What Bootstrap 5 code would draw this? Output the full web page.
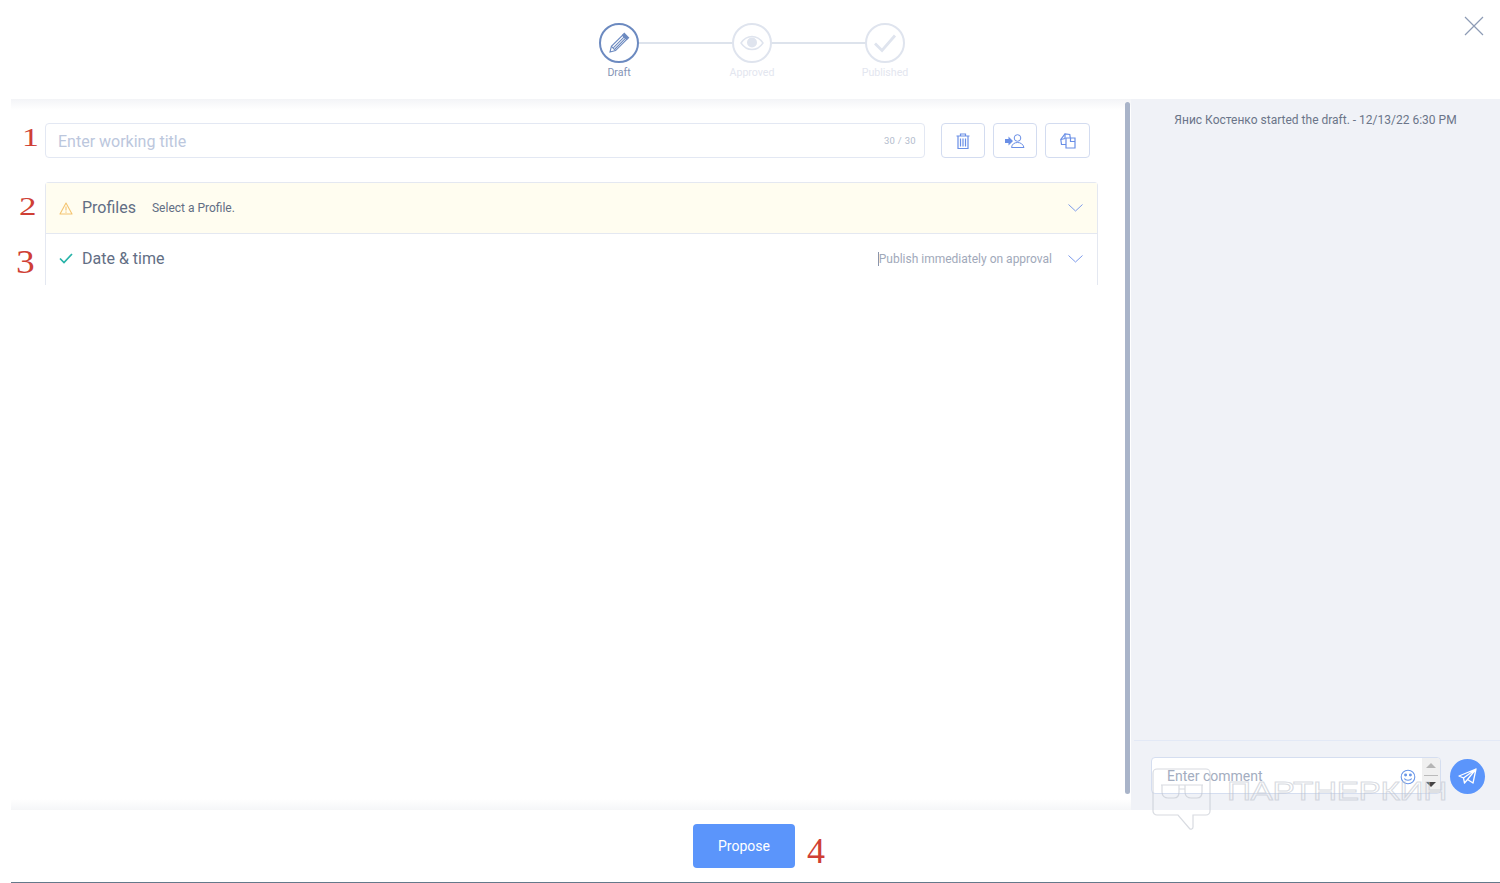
<!DOCTYPE html>
<html lang="en"><head><meta charset="utf-8"><title>Draft</title>
<link rel="stylesheet" href="https://cdn.jsdelivr.net/npm/bootstrap@5.3.0/dist/css/bootstrap.min.css">
<style>
html,body{height:883px;overflow:hidden}
body{font-family:Roboto,"Liberation Sans",sans-serif;background:#fff;color:#5f6b85;position:relative}
.top-bar{height:99px;padding-left:4px;padding-top:23px}
.step{width:133px;position:relative}
.step-circle{width:40px;height:40px;border-radius:50%;border:2px solid #dfe4ee;background:#fff;position:relative;z-index:1}
.step.on .step-circle{border-color:#6c8ac0}
.step-line{position:absolute;left:66px;width:133px;top:19px;height:2px;background:#dde3ec}
.step-label{font-size:10.6px;line-height:12px;margin-top:4px;color:#e3e6ef}
.step.on .step-label{color:#8493b5}
.close-x{position:absolute;left:1464px;top:16px}
.work-area{height:711px;margin-left:11px}
.left-pane{width:1112px;padding:24px 25px 0 34px;background:linear-gradient(#f3f4f7,#fff 11px,#fff 700px,#f5f6f8)}
.title-box{width:880px;height:35px;border:1px solid #e3e8f3;border-radius:4px;padding:2px 8px 0 12px}
.title-ph{font-size:16px;color:#bcc7dd}
.title-count{font-size:9.5px;color:#b3bccd;letter-spacing:.3px}
.tool-btn{height:35px;width:44px;border:1px solid #d3dcf0;border-radius:4px;background:#fff;padding:0}
.tool-wide{width:45px}
.acc{margin-top:24px;width:1053px;border:1px solid #e4e8f1;border-bottom:0;border-radius:4px 4px 0 0}
.acc-row{height:51px;padding:0 14px 2px 13px}
.acc-warn{height:51px;background:#fffdf0;border-bottom:1px solid #e4e8f1;padding-bottom:0}
.acc-title{font-size:16px;color:#626e84;margin-left:9px}
.acc-sub{font-size:12px;color:#626e84;margin-left:16px}
.acc-note{font-size:12px;color:#a1a9ba;border-left:1px solid #8b95ab;margin-right:16px;line-height:14px}
.scroll-gutter{width:9px;padding:3px 1px 16px 2px;background:linear-gradient(#f3f4f7,#fff 11px,#fff 700px,#f5f6f8)}
.scroll-thumb{height:100%;border-radius:3px;background:#a9b4c9}
.side-pane{background:#f0f2f7}
.log-line{font-size:12px;color:#6b7589;padding-top:14px;line-height:15px}
.composer{height:70px;margin-left:3px;border-top:1px solid #e3e9f6;padding:16px 15px 0 17px}
.comment-box{width:290px;height:37px;border:1px solid #d5def0;border-radius:4px;background:#fff;padding:2px 0 0 15px}
.comment-ph{font-size:14px;color:#a3adc0}
.comment-smile{margin-right:6px}
.spin{width:18px;background:#f0f0f0;font-size:0;margin-top:-2px}
.arrow-up{border:5px solid transparent;border-top:0;border-bottom:5px solid #b5b5b5;width:0;margin-top:5px}
.arrow-down{border:5px solid transparent;border-bottom:0;border-top:5px solid #444;width:0;margin-bottom:6px}
.spin-sep{height:1px;width:14px;background:#bbb}
.send-btn{width:35px;height:35px;border-radius:50%;background:#5b95fb;border:0;padding:0;margin-left:9px;margin-top:2px}
.foot-bar{height:73px;margin-left:11px;border-bottom:1px solid #64798a;padding-left:682px;padding-top:14px}
.propose{width:102px;height:44px;background:#5b95fb;border:0;border-radius:4px;color:#fff;font-size:14px}
.anno{position:absolute;font-family:"Liberation Serif",serif;color:#cf3f35;line-height:1;transform-origin:left center}
.anno-one{left:22px;top:125px;font-size:25px;transform:scaleX(1.35)}
.anno-two{left:19px;top:194px;font-size:25px;transform:scaleX(1.4)}
.anno-three{left:16px;top:245px;font-size:34px;transform:scaleX(1.1)}
.anno-four{left:807px;top:833px;font-size:36px}
.mark-sign{position:absolute;left:1227px;top:775px;font-family:"Liberation Sans",sans-serif;font-size:26.5px;line-height:32px;color:transparent;-webkit-text-stroke:1px rgba(190,195,205,.6);white-space:nowrap;letter-spacing:-.3px;pointer-events:none;transform:scaleX(1.26);transform-origin:left center}
.mark-icon{position:absolute;left:1152px;top:767px;pointer-events:none}
</style></head>
<body>
<header class="top-bar d-flex justify-content-center">
  <div class="step on d-flex flex-column align-items-center">
    <div class="step-line"></div>
    <div class="step-circle d-flex align-items-center justify-content-center">
      <svg width="22" height="22" viewBox="0 0 22 22" fill="none" stroke="#6c8ac0" stroke-width="1.1"><path d="M2 20l1.4-5.6L14.5 3.3l4.2 4.2L7.6 18.6z"/><path d="M3.4 14.4l4.2 4.2M5.5 15.6L16 5.2M7 17L17.4 6.4"/><path d="M14.7 3l1.6-1.6 4.3 4.3L19 7.3z" fill="#6c8ac0"/></svg>
    </div>
    <div class="step-label">Draft</div>
  </div>
  <div class="step d-flex flex-column align-items-center">
    <div class="step-line"></div>
    <div class="step-circle d-flex align-items-center justify-content-center">
      <svg width="24" height="16" viewBox="0 0 24 16" fill="none" stroke="#dfe4ee" stroke-width="1.4"><path d="M1 8c3-4.500 7-6.500 11-6.500S20 3.500 23 8c-3 4.500-7 6.500-11 6.500S4 12.500 1 8z"/><circle cx="12" cy="7.500" r="5" fill="#dfe4ee" stroke="none"/></svg>
    </div>
    <div class="step-label">Approved</div>
  </div>
  <div class="step d-flex flex-column align-items-center">
    <div class="step-circle d-flex align-items-center justify-content-center">
      <svg width="24" height="20" viewBox="0 0 24 20" fill="none" stroke="#dfe4ee" stroke-width="2.800"><path d="M2 10.500l7 7L22 2.500"/></svg>
    </div>
    <div class="step-label">Published</div>
  </div>
</header>
<svg class="close-x" width="20" height="20" viewBox="0 0 20 20" stroke="#8d9bb5" stroke-width="1.200"><path d="M1 1l18 18M19 1L1 19"/></svg>

<main class="work-area d-flex">
  <section class="left-pane">
    <div class="d-flex">
      <div class="title-box d-flex align-items-center justify-content-between">
        <span class="title-ph">Enter working title</span><span class="title-count">30 / 30</span>
      </div>
      <div class="d-flex gap-2" style="margin-left:16px">
        <button class="tool-btn d-flex align-items-center justify-content-center">
          <svg width="14" height="16" viewBox="0 0 14 16" fill="none" stroke="#6a8fe6" stroke-width="1.200"><path d="M.5 3h13M4.500 3V1h5v2M2 3v12.500h10V3M4.500 5.500v8M7 5.500v8M9.500 5.500v8"/></svg>
        </button>
        <button class="tool-btn d-flex align-items-center justify-content-center">
          <svg width="20" height="14" viewBox="0 0 20 14" fill="none" stroke="#6a8fe6" stroke-width="1"><circle cx="12.500" cy="4" r="3.300"/><path d="M6.500 13.500c.5-3.500 3-5 6-5s5.500 1.500 6.500 5z"/><path d="M0 5h3.500V2.500L8 7l-4.500 4.500V9H0z" fill="#6a8fe6" stroke="none"/></svg>
        </button>
        <button class="tool-btn tool-wide d-flex align-items-center justify-content-center">
          <svg width="16" height="16" viewBox="0 0 16 16" fill="none" stroke="#6a8fe6" stroke-width="1.200"><path d="M6 11.500H1.500L.8 6.500 5 .8l4.800.7.500 3.500"/><path d="M.8 6.500L5 5.500 5 .8"/><path d="M6 5h9v10H6z" fill="#fff"/><path d="M10.500 5v3.500H15"/></svg>
        </button>
      </div>
    </div>
    <div class="acc">
      <div class="acc-row acc-warn d-flex align-items-center">
        <svg width="14" height="13" viewBox="0 0 14 13" fill="none" stroke="#f4c470" stroke-width="1.100"><path d="M7 1l6 11H1z" stroke-linejoin="round"/><path d="M7 4.500v4M7 9.500v1.200"/></svg>
        <span class="acc-title">Profiles</span><span class="acc-sub">Select a Profile.</span>
        <svg class="ms-auto" width="15" height="8" viewBox="0 0 15 8" fill="none" stroke="#7c9aea"><path d="M.5.500l7 6.500 7-6.500"/></svg>
      </div>
      <div class="acc-row d-flex align-items-center">
        <svg width="14" height="11" viewBox="0 0 14 11" fill="none" stroke="#27b3a8" stroke-width="1.700"><path d="M1 5.500l4 4L13 1"/></svg>
        <span class="acc-title">Date &amp; time</span>
        <span class="acc-note ms-auto">Publish immediately on approval</span>
        <svg width="15" height="8" viewBox="0 0 15 8" fill="none" stroke="#7c9aea"><path d="M.5.500l7 6.500 7-6.500"/></svg>
      </div>
    </div>
  </section>
  <div class="scroll-gutter"><div class="scroll-thumb"></div></div>
  <aside class="side-pane flex-grow-1 d-flex flex-column">
    <div class="log-line flex-grow-1 text-center">Янис Костенко started the draft. - 12/13/22 6:30 PM</div>
    <div class="composer d-flex align-items-start">
      <div class="comment-box d-flex align-items-center overflow-hidden">
        <span class="comment-ph flex-grow-1">Enter comment</span>
        <svg width="16" height="16" viewBox="0 0 16 16" fill="none" stroke="#6a97e8" stroke-width="1.100" class="comment-smile"><circle cx="8" cy="8" r="6.800"/><circle cx="5.600" cy="6" r=".9" fill="#6a97e8"/><circle cx="10.400" cy="6" r=".9" fill="#6a97e8"/><path d="M4.300 9.500c1 2.300 6.400 2.300 7.400 0"/></svg>
        <div class="spin align-self-stretch d-flex flex-column align-items-center justify-content-between">
          <div class="arrow-up"></div><div class="spin-sep"></div><div class="arrow-down"></div>
        </div>
      </div>
      <button class="send-btn d-flex align-items-center justify-content-center">
        <svg width="19" height="17" viewBox="0 0 19 17" fill="none" stroke="#fff" stroke-width="1.300" stroke-linejoin="round"><path d="M18 1L1 8l4.500 2L18 1zM18 1l-3 14-5.500-3.500L18 1zM5.500 10l1 5 3-3.500"/></svg>
      </button>
    </div>
  </aside>
</main>
<footer class="foot-bar"><button class="propose">Propose</button></footer>

<span class="anno anno-one">1</span>
<span class="anno anno-two">2</span>
<span class="anno anno-three">3</span>
<span class="anno anno-four">4</span>

<svg class="mark-icon" width="60" height="64" viewBox="0 0 60 64" fill="none" stroke="rgba(190,195,205,.6)" stroke-width="1.200"><path d="M6 2h48a4 4 0 0 1 4 4v38a4 4 0 0 1-4 4H41v12a2 2 0 0 1-3.500 1.500L26 48H5a4 4 0 0 1-4-4V6a4 4 0 0 1 4-4z"/><path d="M9 18h42M10 18v7c0 4 3 6 6 6h6c3 0 5-2 5-6v-7M33 18v7c0 4 3 6 6 6h6c3 0 5-2 5-6v-7M27 22h6"/></svg>
<span class="mark-sign">ПАРТНЕРКИН</span>
</body></html>
